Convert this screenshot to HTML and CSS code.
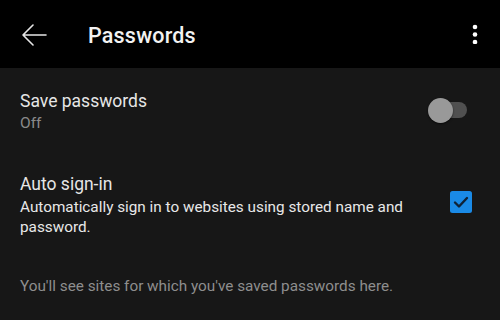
FILE: index.html
```html
<!DOCTYPE html>
<html>
<head>
<meta charset="utf-8">
<link rel="stylesheet" href="styles.css">
</head>
<body>
<div class="app">
  <header class="topbar">
    <svg class="back" width="26" height="22" viewBox="0 0 26 22">
      <path d="M25 11H2M12 1L2 11l10 10" fill="none" stroke="#e6e6e6" stroke-width="1.6" stroke-linecap="round" stroke-linejoin="round"/>
    </svg>
    <h1 class="title">Passwords</h1>
    <svg class="kebab" width="6" height="20" viewBox="0 0 6 20">
      <circle cx="3" cy="3" r="2.3" fill="#fff"/>
      <circle cx="3" cy="10.5" r="2.3" fill="#fff"/>
      <circle cx="3" cy="18" r="2.3" fill="#fff"/>
    </svg>
  </header>
  <main class="content">
    <div class="row row-save">
      <div class="text">
        <div class="label">Save passwords</div>
        <div class="sub">Off</div>
      </div>
      <div class="toggle"><span class="thumb"></span></div>
    </div>
    <div class="row row-auto">
      <div class="text">
        <div class="label">Auto sign-in</div>
        <div class="desc">Automatically sign in to websites using stored name and password.</div>
      </div>
      <div class="check">
        <svg width="22" height="22" viewBox="0 0 22 22">
          <rect x="0" y="0" width="22" height="22" rx="2.5" fill="#1a8ae6"/>
          <path d="M5 11.5l4 4 8-8.5" fill="none" stroke="#0f2236" stroke-width="2.4" stroke-linecap="round" stroke-linejoin="round"/>
        </svg>
      </div>
    </div>
    <p class="empty">You'll see sites for which you've saved passwords here.</p>
  </main>
</div>
</body>
</html>
```
FILE: styles.css
```css
* { box-sizing: border-box; }
html, body { margin: 0; padding: 0; }
body {
  background: #171717;
  font-family: Roboto, "Noto Sans", sans-serif;
  width: 500px;
  height: 320px;
  overflow: hidden;
}
.topbar {
  height: 68px;
  background: #000;
  display: flex;
  align-items: center;
  padding: 0 22px 0 21px;
}
.back { display: block; margin-top: 1px; }
.title {
  margin: 2px 0 0 41px;
  font-size: 21.5px;
  font-weight: 500;
  color: #f2f2f2;
  flex: 1;
  letter-spacing: 0.2px;
}
.kebab { display: block; margin-top: 0; }
.content { padding: 0 20px; }
.row {
  display: flex;
  align-items: center;
  justify-content: space-between;
}
.row-save { padding-top: 23px; height: 106px; align-items: flex-start; }
.row-save .toggle { margin-top: 11px; }
.label {
  font-size: 17.5px;
  color: #e6e6e6;
  line-height: 20px;
}
.sub {
  font-size: 15.5px;
  color: #8a8a8a;
  line-height: 20px;
  margin-top: 2px;
}
.toggle {
  position: relative;
  width: 36px;
  height: 16px;
  border-radius: 8px;
  background: #505050;
  margin-right: 13px;
}
.thumb {
  position: absolute;
  left: -3px;
  top: -4px;
  width: 25px;
  height: 25px;
  border-radius: 50%;
  background: #999;
  box-shadow: 0 1px 2px rgba(0,0,0,0.6);
}
.row-auto { align-items: flex-start; }
.row-auto .text { width: 410px; }
.desc {
  font-size: 15.3px;
  color: #e8e8e8;
  line-height: 20px;
  margin-top: 3px;
}
.check { margin-right: 8px; margin-top: 17px; }
.check svg { display: block; }
.empty {
  margin: 40px 0 0;
  font-size: 15.3px;
  color: #8e8e8e;
}
```
